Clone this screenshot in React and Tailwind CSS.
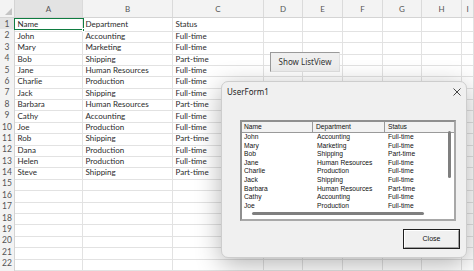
import React from "react";

const data = [
  ["Name", "Department", "Status"],
  ["John", "Accounting", "Full-time"],
  ["Mary", "Marketing", "Full-time"],
  ["Bob", "Shipping", "Part-time"],
  ["Jane", "Human Resources", "Full-time"],
  ["Charlie", "Production", "Full-time"],
  ["Jack", "Shipping", "Full-time"],
  ["Barbara", "Human Resources", "Part-time"],
  ["Cathy", "Accounting", "Full-time"],
  ["Joe", "Production", "Full-time"],
  ["Rob", "Shipping", "Part-time"],
  ["Dana", "Production", "Full-time"],
  ["Helen", "Production", "Full-time"],
  ["Steve", "Shipping", "Part-time"],
];

const cols = ["A", "B", "C", "D", "E", "F", "G", "H", "I"];
const tmpl = "grid grid-cols-[15px_68px_90px_91px_39px_40px_40px_39px_40px_1fr]";

function HeaderRow() {
  return (
    <div className={`${tmpl} h-[18px] bg-[#f3f3f3] border-b border-[#d4d4d4]`}>
      <div className="relative border-r border-[#d4d4d4]">
        <svg className="absolute right-[2px] bottom-[2px]" width="7" height="7" viewBox="0 0 7 7">
          <polygon points="7,0 7,7 0,7" fill="#c4c4c4" />
        </svg>
      </div>
      {cols.map((c, i) => (
        <div
          key={c}
          className={`flex items-center justify-center border-r border-[#dadada] text-[8px] text-[#555] ${
            i === 0 ? "bg-[#e3e3e3]" : ""
          }`}
        >
          {c}
        </div>
      ))}
    </div>
  );
}

function SheetRow({ n, blank }) {
  const r = data[n - 1] || ["", "", ""];
  return (
    <div className={`${tmpl} h-[11.4px]`}>
      <div
        className={`flex items-center justify-center border-r border-b border-[#d4d4d4] text-[8.5px] text-[#555] ${
          n === 1 ? "bg-[#e3e3e3]" : "bg-[#f3f3f3]"
        }`}
      >
        {blank ? "" : n}
      </div>
      {cols.map((c, i) => (
        <div
          key={c}
          className="flex items-center pl-[2.5px] border-r border-b border-[#e2e2e2] text-[8px] text-[#2a2a2a] whitespace-nowrap overflow-hidden leading-none"
        >
          {i < 3 ? r[i] : ""}
        </div>
      ))}
    </div>
  );
}

function ListView() {
  const rows = data.slice(1, 10);
  const lvCols = "grid grid-cols-[71px_72px_1fr]";
  return (
    <div className="relative w-[216px] h-[101px] border-2 border-t-[#8f8f8f] border-l-[#8f8f8f] border-r-[#a8a8a8] border-b-[#a8a8a8] bg-white font-['Liberation_Sans',sans-serif] text-[6.7px] text-[#111]">
      <div className={`${lvCols} h-[11px] bg-[#f2f2f2] border-b border-[#9a9a9a]`}>
        <div className="flex items-center pl-[2px] border-r border-[#9a9a9a]">Name</div>
        <div className="flex items-center pl-[3px] border-r border-[#9a9a9a]">Department</div>
        <div className="flex items-center pl-[3px]">Status</div>
      </div>
      {rows.map((r, i) => (
        <div key={i} className={`${lvCols} h-[8.6px] leading-none`}>
          <div className="flex items-center pl-[2px]">{r[0]}</div>
          <div className="flex items-center pl-[4px]">{r[1]}</div>
          <div className="flex items-center pl-[3px]">{r[2]}</div>
        </div>
      ))}
      <div className="absolute left-[206px] top-[9px] w-[3px] h-[47px] rounded-full bg-[#7f7f7f]" />
      <div className="absolute left-[10px] top-[90px] w-[172px] h-[2.5px] rounded-full bg-[#7f7f7f]" />
    </div>
  );
}

function UserForm() {
  return (
    <div className="absolute left-[221px] top-[81px] w-[246px] h-[177px] rounded-[7px] bg-[#f0f0f0] border border-[#cdcdcd] shadow-[0_6px_26px_rgba(0,0,0,0.3)] flex flex-col">
      <div className="h-[20px] flex items-center justify-between pl-[5px] pr-[5px] text-[8px] text-[#222] font-['Noto_Sans',sans-serif]">
        <span>UserForm1</span>
        <svg width="8" height="8" viewBox="0 0 8 8">
          <path d="M0.5 0.5 L7.5 7.5 M7.5 0.5 L0.5 7.5" stroke="#333" strokeWidth="0.9" />
        </svg>
      </div>
      <div className="pl-[18px] pt-[18px]">
        <ListView />
      </div>
      <div className="flex justify-end pr-[6px] mt-[8px]">
        <div className="w-[57px] h-[20px] border border-[#1f1f1f] bg-[#f0f0f0]">
          <div className="w-full h-full border border-t-white border-l-white border-r-[#a0a0a0] border-b-[#a0a0a0] flex items-center justify-center text-[7px] text-[#111] font-['Liberation_Sans',sans-serif]">
            Close
          </div>
        </div>
      </div>
    </div>
  );
}

export default function App() {
  const nums = Array.from({ length: 23 }, (_, i) => i + 1);
  return (
    <div className="relative w-[474px] h-[271px] overflow-hidden bg-white font-['Lato',sans-serif]">
      <HeaderRow />
      {nums.map((n) => (
        <SheetRow key={n} n={n} blank={n === 23} />
      ))}
      <div className="absolute left-[14px] top-[17.5px] w-[70px] h-[12.8px] border-[1.5px] border-[#107c41]" />
      <div className="absolute left-[81.5px] top-[28px] w-[3.5px] h-[3.5px] bg-[#107c41] border border-white" />
      <div className="absolute left-[270px] top-[52px] w-[70px] h-[20px] bg-[#efefef] border-t-[1.5px] border-l-[1.5px] border-t-[#9a9a9a] border-l-[#9a9a9a] border-r border-b border-r-[#e0e0e0] border-b-[#e0e0e0] flex items-center justify-center text-[8px] text-[#333] font-['Noto_Sans',sans-serif]">
        Show ListView
      </div>
      <UserForm />
    </div>
  );
}
